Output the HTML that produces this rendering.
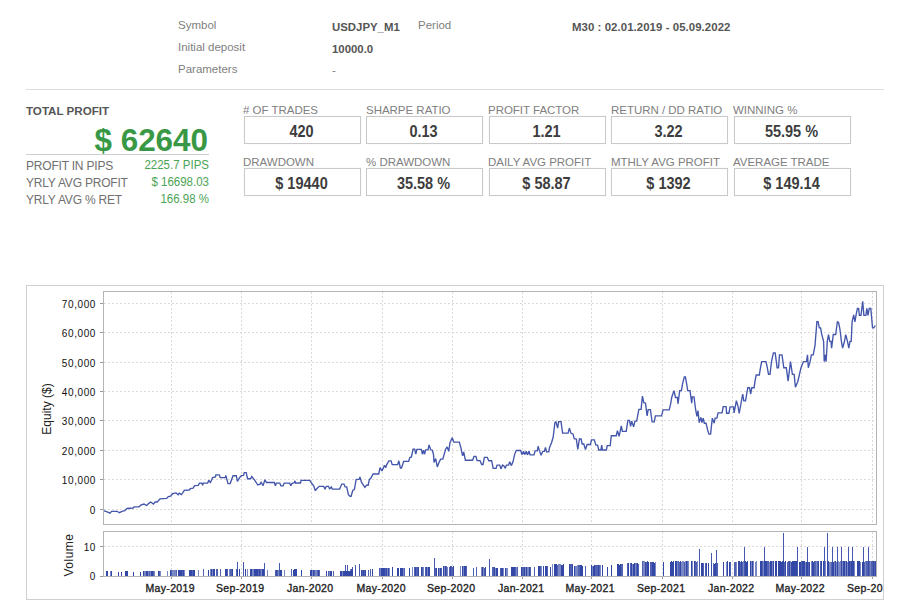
<!DOCTYPE html>
<html><head><meta charset="utf-8">
<style>
html,body{margin:0;padding:0;background:#fff;width:908px;height:612px;overflow:hidden;position:relative;font-family:"Liberation Sans",sans-serif;}
.a{position:absolute;white-space:nowrap;line-height:1;}
.hl{font-size:11.5px;color:#808080;}
.hv{font-size:11.4px;color:#555;font-weight:bold;}
.rule{position:absolute;height:1px;background:#dcdcdc;}
.lbl{font-size:11.5px;color:#808080;letter-spacing:-0.02px;}
.box{position:absolute;width:115px;height:26px;border:1px solid #c9c9c9;box-shadow:0 0 0.6px #bbb;}
.val{position:absolute;left:-1px;width:115px;text-align:center;font-size:14.5px;font-weight:bold;color:#3d3d3d;top:8px;line-height:1;transform:scaleY(1.1);transform-origin:50% 100%;}
.sl{font-size:12px;color:#707070;letter-spacing:-0.2px;}
.sv{font-size:11.5px;color:#4aa354;text-align:right;transform:scaleY(1.1);transform-origin:100% 100%;}
.yl{position:absolute;right:812px;font-size:10px;line-height:12px;color:#111;letter-spacing:0.6px;white-space:nowrap;}
.xl{position:absolute;top:583px;width:80px;text-align:center;font-size:10.5px;line-height:10px;font-weight:normal;color:#222;letter-spacing:0.35px;-webkit-text-stroke:0.35px #222;white-space:nowrap;}
.rot{position:absolute;white-space:nowrap;font-size:12px;line-height:12px;color:#222;transform:translate(-50%,-50%) rotate(-90deg);}
</style></head><body>
<!-- header -->
<div class="a hl" style="left:178px;top:20px;">Symbol</div>
<div class="a hl" style="left:178px;top:42px;">Initial deposit</div>
<div class="a hl" style="left:178px;top:64px;">Parameters</div>
<div class="a hv" style="left:332px;top:22px;">USDJPY_M1</div>
<div class="a hv" style="left:332px;top:44px;">10000.0</div>
<div class="a hl" style="left:332px;top:65px;">-</div>
<div class="a hl" style="left:418px;top:20px;">Period</div>
<div class="a hv" style="left:572px;top:22px;letter-spacing:0.07px;">M30 : 02.01.2019 - 05.09.2022</div>
<div class="rule" style="left:26px;top:89px;width:858px;"></div>

<!-- total profit -->
<div class="a" style="left:26px;top:105px;font-size:11.6px;font-weight:bold;color:#555;">TOTAL PROFIT</div>
<div class="a" style="right:700px;top:124.5px;font-size:31.4px;font-weight:bold;color:#399845;">$ 62640</div>
<div class="rule" style="left:26px;top:154px;width:183px;background:#cfcfcf;"></div>
<div class="a sl" style="left:26px;top:160px;">PROFIT IN PIPS</div>
<div class="a sl" style="left:26px;top:177px;">YRLY AVG PROFIT</div>
<div class="a sl" style="left:26px;top:194px;">YRLY AVG % RET</div>
<div class="a sv" style="right:699px;top:160px;">2225.7 PIPS</div>
<div class="a sv" style="right:699px;top:177px;">$ 16698.03</div>
<div class="a sv" style="right:699px;top:194px;">166.98 %</div>

<!-- stat boxes -->
<div class="a lbl" style="left:243px;top:105px;"># OF TRADES</div>
<div class="a lbl" style="left:366px;top:105px;">SHARPE RATIO</div>
<div class="a lbl" style="left:488px;top:105px;">PROFIT FACTOR</div>
<div class="a lbl" style="left:611px;top:105px;">RETURN / DD RATIO</div>
<div class="a lbl" style="left:733px;top:105px;">WINNING %</div>
<div class="box" style="left:244px;top:116px;"><div class="val">420</div></div>
<div class="box" style="left:366px;top:116px;"><div class="val">0.13</div></div>
<div class="box" style="left:489px;top:116px;"><div class="val">1.21</div></div>
<div class="box" style="left:611px;top:116px;"><div class="val">3.22</div></div>
<div class="box" style="left:734px;top:116px;"><div class="val">55.95 %</div></div>

<div class="a lbl" style="left:243px;top:157px;">DRAWDOWN</div>
<div class="a lbl" style="left:366px;top:157px;">% DRAWDOWN</div>
<div class="a lbl" style="left:488px;top:157px;">DAILY AVG PROFIT</div>
<div class="a lbl" style="left:611px;top:157px;">MTHLY AVG PROFIT</div>
<div class="a lbl" style="left:733px;top:157px;">AVERAGE TRADE</div>
<div class="box" style="left:244px;top:168px;"><div class="val">$ 19440</div></div>
<div class="box" style="left:366px;top:168px;"><div class="val">35.58 %</div></div>
<div class="box" style="left:489px;top:168px;"><div class="val">$ 58.87</div></div>
<div class="box" style="left:611px;top:168px;"><div class="val">$ 1392</div></div>
<div class="box" style="left:734px;top:168px;"><div class="val">$ 149.14</div></div>

<!-- chart -->
<svg style="position:absolute;left:0;top:0" width="908" height="612" viewBox="0 0 908 612" shape-rendering="crispEdges">
<rect x="26.5" y="285.5" width="857" height="314" fill="none" stroke="#d0d0d2" stroke-width="1"/>
<path d="M104 303.5H876 M104 332.5H876 M104 362.5H876 M104 391.5H876 M104 420.5H876 M104 450.5H876 M104 479.5H876 M104 509.5H876 M171.5 292V524 M171.5 532V576 M241.5 292V524 M241.5 532V576 M311.5 292V524 M311.5 532V576 M382.5 292V524 M382.5 532V576 M452.5 292V524 M452.5 532V576 M522.5 292V524 M522.5 532V576 M591.5 292V524 M591.5 532V576 M662.5 292V524 M662.5 532V576 M732.5 292V524 M732.5 532V576 M801.5 292V524 M801.5 532V576 M872.5 292V524 M872.5 532V576 M104 546.5H876" stroke="#dadada" stroke-width="1" stroke-dasharray="2,2" fill="none"/>
<path d="M100 303.5H103 M100 332.5H103 M100 362.5H103 M100 391.5H103 M100 420.5H103 M100 450.5H103 M100 479.5H103 M100 509.5H103 M100 546.5H103 M100 576.5H103 M171.5 577V579 M241.5 577V579 M311.5 577V579 M382.5 577V579 M452.5 577V579 M522.5 577V579 M591.5 577V579 M662.5 577V579 M732.5 577V579 M801.5 577V579 M872.5 577V579" stroke="#999" stroke-width="1" fill="none"/>
</svg>
<svg style="position:absolute;left:0;top:0" width="908" height="612" viewBox="0 0 908 612"><g fill="#3347a6" shape-rendering="crispEdges"><rect x="103" y="569.3" width="1" height="6.7" fill-opacity="1.00"/><rect x="106" y="571.0" width="1" height="5.0" fill-opacity="1.00"/><rect x="107" y="571.0" width="1" height="5.0" fill-opacity="1.00"/><rect x="110" y="571.4" width="1" height="4.7" fill-opacity="0.65"/><rect x="111" y="571.4" width="1" height="4.7" fill-opacity="1.00"/><rect x="118" y="572.0" width="1" height="4.0" fill-opacity="1.00"/><rect x="121" y="572.3" width="1" height="3.7" fill-opacity="1.00"/><rect x="125" y="571.0" width="1" height="5.0" fill-opacity="1.00"/><rect x="126" y="571.0" width="1" height="5.0" fill-opacity="1.00"/><rect x="127" y="571.0" width="1" height="5.0" fill-opacity="1.00"/><rect x="133" y="572.0" width="1" height="4.0" fill-opacity="1.00"/><rect x="140" y="572.0" width="1" height="4.0" fill-opacity="1.00"/><rect x="143" y="570.5" width="1" height="5.5" fill-opacity="1.00"/><rect x="144" y="570.9" width="1" height="5.1" fill-opacity="0.65"/><rect x="145" y="570.9" width="1" height="5.1" fill-opacity="0.65"/><rect x="146" y="570.5" width="1" height="5.5" fill-opacity="1.00"/><rect x="147" y="570.5" width="1" height="5.5" fill-opacity="1.00"/><rect x="148" y="570.5" width="1" height="5.5" fill-opacity="0.65"/><rect x="149" y="570.5" width="1" height="5.5" fill-opacity="0.85"/><rect x="150" y="570.5" width="1" height="5.5" fill-opacity="0.65"/><rect x="151" y="570.9" width="1" height="5.1" fill-opacity="1.00"/><rect x="152" y="570.5" width="1" height="5.5" fill-opacity="1.00"/><rect x="153" y="570.9" width="1" height="5.1" fill-opacity="0.85"/><rect x="154" y="570.5" width="1" height="5.5" fill-opacity="0.65"/><rect x="158" y="570.5" width="1" height="5.5" fill-opacity="1.00"/><rect x="159" y="570.9" width="1" height="5.1" fill-opacity="0.85"/><rect x="160" y="570.5" width="1" height="5.5" fill-opacity="0.65"/><rect x="167" y="570.5" width="1" height="5.5" fill-opacity="0.65"/><rect x="170" y="570.0" width="1" height="6.0" fill-opacity="1.00"/><rect x="171" y="569.5" width="1" height="6.5" fill-opacity="0.85"/><rect x="172" y="570.0" width="1" height="6.0" fill-opacity="0.65"/><rect x="173" y="569.5" width="1" height="6.5" fill-opacity="0.65"/><rect x="174" y="569.5" width="1" height="6.5" fill-opacity="0.65"/><rect x="175" y="569.5" width="1" height="6.5" fill-opacity="0.65"/><rect x="176" y="570.0" width="1" height="6.0" fill-opacity="0.85"/><rect x="178" y="569.5" width="1" height="6.5" fill-opacity="1.00"/><rect x="179" y="569.5" width="1" height="6.5" fill-opacity="1.00"/><rect x="180" y="569.5" width="1" height="6.5" fill-opacity="1.00"/><rect x="181" y="570.0" width="1" height="6.0" fill-opacity="1.00"/><rect x="182" y="569.5" width="1" height="6.5" fill-opacity="0.85"/><rect x="183" y="570.0" width="1" height="6.0" fill-opacity="1.00"/><rect x="184" y="570.0" width="1" height="6.0" fill-opacity="0.65"/><rect x="189" y="570.0" width="1" height="6.0" fill-opacity="1.00"/><rect x="190" y="569.5" width="1" height="6.5" fill-opacity="1.00"/><rect x="191" y="570.0" width="1" height="6.0" fill-opacity="1.00"/><rect x="192" y="569.5" width="1" height="6.5" fill-opacity="0.85"/><rect x="193" y="569.5" width="1" height="6.5" fill-opacity="1.00"/><rect x="194" y="569.5" width="1" height="6.5" fill-opacity="1.00"/><rect x="198" y="569.5" width="1" height="6.5" fill-opacity="0.65"/><rect x="203" y="569.0" width="1" height="7.0" fill-opacity="0.85"/><rect x="208" y="569.5" width="1" height="6.5" fill-opacity="1.00"/><rect x="210" y="569.0" width="1" height="7.0" fill-opacity="0.65"/><rect x="211" y="569.0" width="1" height="7.0" fill-opacity="1.00"/><rect x="212" y="569.0" width="1" height="7.0" fill-opacity="0.65"/><rect x="213" y="569.0" width="1" height="7.0" fill-opacity="1.00"/><rect x="214" y="569.0" width="1" height="7.0" fill-opacity="1.00"/><rect x="216" y="569.0" width="1" height="7.0" fill-opacity="0.85"/><rect x="217" y="569.0" width="1" height="7.0" fill-opacity="0.85"/><rect x="220" y="569.0" width="1" height="7.0" fill-opacity="0.85"/><rect x="225" y="568.8" width="1" height="7.2" fill-opacity="1.00"/><rect x="226" y="568.8" width="1" height="7.2" fill-opacity="1.00"/><rect x="227" y="568.8" width="1" height="7.2" fill-opacity="0.85"/><rect x="229" y="568.8" width="1" height="7.2" fill-opacity="0.65"/><rect x="230" y="569.3" width="1" height="6.7" fill-opacity="0.85"/><rect x="231" y="568.8" width="1" height="7.2" fill-opacity="0.85"/><rect x="232" y="568.8" width="1" height="7.2" fill-opacity="1.00"/><rect x="236" y="568.8" width="1" height="7.2" fill-opacity="0.85"/><rect x="237" y="569.3" width="1" height="6.7" fill-opacity="1.00"/><rect x="239" y="568.8" width="1" height="7.2" fill-opacity="1.00"/><rect x="245" y="569.3" width="1" height="6.7" fill-opacity="1.00"/><rect x="247" y="569.3" width="1" height="6.7" fill-opacity="0.65"/><rect x="250" y="568.8" width="1" height="7.2" fill-opacity="1.00"/><rect x="251" y="568.8" width="1" height="7.2" fill-opacity="1.00"/><rect x="252" y="568.8" width="1" height="7.2" fill-opacity="0.65"/><rect x="253" y="568.8" width="1" height="7.2" fill-opacity="0.65"/><rect x="254" y="568.8" width="1" height="7.2" fill-opacity="1.00"/><rect x="255" y="568.8" width="1" height="7.2" fill-opacity="1.00"/><rect x="256" y="568.8" width="1" height="7.2" fill-opacity="1.00"/><rect x="257" y="568.8" width="1" height="7.2" fill-opacity="1.00"/><rect x="258" y="568.8" width="1" height="7.2" fill-opacity="0.85"/><rect x="259" y="568.8" width="1" height="7.2" fill-opacity="1.00"/><rect x="260" y="569.3" width="1" height="6.7" fill-opacity="0.85"/><rect x="261" y="568.8" width="1" height="7.2" fill-opacity="0.65"/><rect x="262" y="569.3" width="1" height="6.7" fill-opacity="1.00"/><rect x="263" y="568.8" width="1" height="7.2" fill-opacity="1.00"/><rect x="267" y="570.0" width="1" height="6.0" fill-opacity="0.65"/><rect x="275" y="570.1" width="1" height="5.9" fill-opacity="0.85"/><rect x="276" y="569.7" width="1" height="6.3" fill-opacity="1.00"/><rect x="277" y="569.7" width="1" height="6.3" fill-opacity="0.85"/><rect x="278" y="569.7" width="1" height="6.3" fill-opacity="0.65"/><rect x="280" y="570.1" width="1" height="5.9" fill-opacity="1.00"/><rect x="281" y="569.7" width="1" height="6.3" fill-opacity="1.00"/><rect x="284" y="569.7" width="1" height="6.3" fill-opacity="0.65"/><rect x="291" y="569.3" width="1" height="6.7" fill-opacity="0.85"/><rect x="293" y="569.8" width="1" height="6.2" fill-opacity="1.00"/><rect x="294" y="569.3" width="1" height="6.7" fill-opacity="1.00"/><rect x="295" y="569.3" width="1" height="6.7" fill-opacity="1.00"/><rect x="296" y="569.3" width="1" height="6.7" fill-opacity="1.00"/><rect x="301" y="570.1" width="1" height="5.9" fill-opacity="1.00"/><rect x="310" y="570.1" width="1" height="5.9" fill-opacity="1.00"/><rect x="311" y="569.7" width="1" height="6.3" fill-opacity="1.00"/><rect x="312" y="570.1" width="1" height="5.9" fill-opacity="0.65"/><rect x="313" y="569.7" width="1" height="6.3" fill-opacity="1.00"/><rect x="314" y="569.7" width="1" height="6.3" fill-opacity="0.85"/><rect x="315" y="570.1" width="1" height="5.9" fill-opacity="0.65"/><rect x="316" y="569.7" width="1" height="6.3" fill-opacity="0.65"/><rect x="317" y="569.7" width="1" height="6.3" fill-opacity="0.85"/><rect x="318" y="569.7" width="1" height="6.3" fill-opacity="1.00"/><rect x="319" y="569.7" width="1" height="6.3" fill-opacity="0.85"/><rect x="326" y="571.1" width="1" height="4.9" fill-opacity="1.00"/><rect x="328" y="571.1" width="1" height="4.9" fill-opacity="0.85"/><rect x="329" y="570.7" width="1" height="5.3" fill-opacity="0.65"/><rect x="330" y="570.7" width="1" height="5.3" fill-opacity="1.00"/><rect x="331" y="570.7" width="1" height="5.3" fill-opacity="1.00"/><rect x="333" y="570.7" width="1" height="5.3" fill-opacity="0.85"/><rect x="340" y="570.7" width="1" height="5.3" fill-opacity="1.00"/><rect x="341" y="571.1" width="1" height="4.9" fill-opacity="1.00"/><rect x="342" y="570.7" width="1" height="5.3" fill-opacity="0.65"/><rect x="343" y="570.7" width="1" height="5.3" fill-opacity="1.00"/><rect x="344" y="570.7" width="1" height="5.3" fill-opacity="1.00"/><rect x="345" y="570.7" width="1" height="5.3" fill-opacity="1.00"/><rect x="346" y="570.7" width="1" height="5.3" fill-opacity="1.00"/><rect x="347" y="570.7" width="1" height="5.3" fill-opacity="1.00"/><rect x="348" y="570.7" width="1" height="5.3" fill-opacity="1.00"/><rect x="349" y="570.7" width="1" height="5.3" fill-opacity="1.00"/><rect x="350" y="571.1" width="1" height="4.9" fill-opacity="1.00"/><rect x="351" y="571.1" width="1" height="4.9" fill-opacity="0.65"/><rect x="350" y="569.0" width="1" height="7.0" fill-opacity="0.65"/><rect x="351" y="569.0" width="1" height="7.0" fill-opacity="1.00"/><rect x="352" y="569.5" width="1" height="6.5" fill-opacity="1.00"/><rect x="361" y="570.0" width="1" height="6.0" fill-opacity="1.00"/><rect x="362" y="570.4" width="1" height="5.6" fill-opacity="0.85"/><rect x="363" y="570.4" width="1" height="5.6" fill-opacity="1.00"/><rect x="364" y="570.0" width="1" height="6.0" fill-opacity="0.85"/><rect x="365" y="570.4" width="1" height="5.6" fill-opacity="1.00"/><rect x="368" y="569.8" width="1" height="6.2" fill-opacity="0.85"/><rect x="370" y="569.3" width="1" height="6.7" fill-opacity="0.85"/><rect x="372" y="569.3" width="1" height="6.7" fill-opacity="1.00"/><rect x="379" y="567.8" width="1" height="8.2" fill-opacity="0.85"/><rect x="380" y="567.8" width="1" height="8.2" fill-opacity="0.65"/><rect x="381" y="567.8" width="1" height="8.2" fill-opacity="1.00"/><rect x="382" y="567.8" width="1" height="8.2" fill-opacity="1.00"/><rect x="383" y="567.8" width="1" height="8.2" fill-opacity="1.00"/><rect x="384" y="568.4" width="1" height="7.6" fill-opacity="1.00"/><rect x="385" y="567.8" width="1" height="8.2" fill-opacity="0.85"/><rect x="386" y="568.4" width="1" height="7.6" fill-opacity="1.00"/><rect x="387" y="567.8" width="1" height="8.2" fill-opacity="0.65"/><rect x="388" y="567.8" width="1" height="8.2" fill-opacity="1.00"/><rect x="389" y="567.8" width="1" height="8.2" fill-opacity="0.65"/><rect x="392" y="567.2" width="1" height="8.8" fill-opacity="1.00"/><rect x="397" y="567.5" width="1" height="8.5" fill-opacity="1.00"/><rect x="398" y="568.1" width="1" height="7.9" fill-opacity="1.00"/><rect x="400" y="567.5" width="1" height="8.5" fill-opacity="1.00"/><rect x="401" y="568.1" width="1" height="7.9" fill-opacity="1.00"/><rect x="402" y="567.5" width="1" height="8.5" fill-opacity="1.00"/><rect x="403" y="567.5" width="1" height="8.5" fill-opacity="0.65"/><rect x="404" y="567.5" width="1" height="8.5" fill-opacity="0.85"/><rect x="409" y="567.5" width="1" height="8.5" fill-opacity="1.00"/><rect x="412" y="567.2" width="1" height="8.8" fill-opacity="0.65"/><rect x="414" y="566.5" width="1" height="9.5" fill-opacity="0.85"/><rect x="415" y="566.5" width="1" height="9.5" fill-opacity="1.00"/><rect x="416" y="566.5" width="1" height="9.5" fill-opacity="0.85"/><rect x="417" y="566.5" width="1" height="9.5" fill-opacity="0.85"/><rect x="418" y="567.2" width="1" height="8.8" fill-opacity="1.00"/><rect x="421" y="566.5" width="1" height="9.5" fill-opacity="1.00"/><rect x="422" y="566.5" width="1" height="9.5" fill-opacity="0.85"/><rect x="423" y="566.5" width="1" height="9.5" fill-opacity="0.65"/><rect x="425" y="566.5" width="1" height="9.5" fill-opacity="0.85"/><rect x="426" y="566.5" width="1" height="9.5" fill-opacity="1.00"/><rect x="427" y="566.5" width="1" height="9.5" fill-opacity="0.65"/><rect x="428" y="566.5" width="1" height="9.5" fill-opacity="1.00"/><rect x="429" y="566.5" width="1" height="9.5" fill-opacity="1.00"/><rect x="435" y="567.5" width="1" height="8.5" fill-opacity="0.85"/><rect x="436" y="568.1" width="1" height="7.9" fill-opacity="1.00"/><rect x="438" y="567.5" width="1" height="8.5" fill-opacity="1.00"/><rect x="439" y="568.1" width="1" height="7.9" fill-opacity="0.65"/><rect x="440" y="568.1" width="1" height="7.9" fill-opacity="1.00"/><rect x="441" y="567.5" width="1" height="8.5" fill-opacity="0.85"/><rect x="443" y="566.0" width="1" height="10.0" fill-opacity="1.00"/><rect x="444" y="566.0" width="1" height="10.0" fill-opacity="0.65"/><rect x="445" y="566.0" width="1" height="10.0" fill-opacity="1.00"/><rect x="446" y="566.0" width="1" height="10.0" fill-opacity="0.85"/><rect x="447" y="566.7" width="1" height="9.3" fill-opacity="0.65"/><rect x="449" y="566.7" width="1" height="9.3" fill-opacity="0.85"/><rect x="450" y="566.0" width="1" height="10.0" fill-opacity="1.00"/><rect x="451" y="566.0" width="1" height="10.0" fill-opacity="0.85"/><rect x="452" y="566.7" width="1" height="9.3" fill-opacity="0.85"/><rect x="453" y="566.0" width="1" height="10.0" fill-opacity="1.00"/><rect x="460" y="565.5" width="1" height="10.5" fill-opacity="0.65"/><rect x="462" y="565.5" width="1" height="10.5" fill-opacity="1.00"/><rect x="463" y="566.2" width="1" height="9.8" fill-opacity="0.65"/><rect x="464" y="565.5" width="1" height="10.5" fill-opacity="1.00"/><rect x="465" y="565.5" width="1" height="10.5" fill-opacity="1.00"/><rect x="466" y="565.5" width="1" height="10.5" fill-opacity="0.85"/><rect x="473" y="568.1" width="1" height="7.9" fill-opacity="0.85"/><rect x="476" y="567.2" width="1" height="8.8" fill-opacity="0.85"/><rect x="481" y="567.0" width="1" height="9.0" fill-opacity="0.65"/><rect x="482" y="567.0" width="1" height="9.0" fill-opacity="1.00"/><rect x="483" y="567.0" width="1" height="9.0" fill-opacity="0.65"/><rect x="484" y="567.6" width="1" height="8.4" fill-opacity="0.85"/><rect x="485" y="567.0" width="1" height="9.0" fill-opacity="1.00"/><rect x="492" y="567.3" width="1" height="8.7" fill-opacity="0.85"/><rect x="493" y="567.3" width="1" height="8.7" fill-opacity="0.85"/><rect x="494" y="567.3" width="1" height="8.7" fill-opacity="1.00"/><rect x="495" y="567.9" width="1" height="8.1" fill-opacity="0.65"/><rect x="496" y="567.9" width="1" height="8.1" fill-opacity="1.00"/><rect x="497" y="567.9" width="1" height="8.1" fill-opacity="1.00"/><rect x="500" y="567.8" width="1" height="8.2" fill-opacity="0.85"/><rect x="501" y="567.8" width="1" height="8.2" fill-opacity="1.00"/><rect x="502" y="568.4" width="1" height="7.6" fill-opacity="1.00"/><rect x="503" y="568.4" width="1" height="7.6" fill-opacity="0.65"/><rect x="505" y="567.8" width="1" height="8.2" fill-opacity="1.00"/><rect x="506" y="568.4" width="1" height="7.6" fill-opacity="0.65"/><rect x="507" y="568.4" width="1" height="7.6" fill-opacity="0.65"/><rect x="511" y="566.8" width="1" height="9.2" fill-opacity="1.00"/><rect x="512" y="567.4" width="1" height="8.6" fill-opacity="1.00"/><rect x="513" y="566.8" width="1" height="9.2" fill-opacity="1.00"/><rect x="514" y="566.8" width="1" height="9.2" fill-opacity="1.00"/><rect x="515" y="566.8" width="1" height="9.2" fill-opacity="0.85"/><rect x="516" y="566.8" width="1" height="9.2" fill-opacity="0.65"/><rect x="517" y="566.8" width="1" height="9.2" fill-opacity="0.85"/><rect x="521" y="566.5" width="1" height="9.5" fill-opacity="1.00"/><rect x="522" y="567.2" width="1" height="8.8" fill-opacity="0.85"/><rect x="523" y="566.5" width="1" height="9.5" fill-opacity="0.85"/><rect x="524" y="566.5" width="1" height="9.5" fill-opacity="1.00"/><rect x="525" y="566.5" width="1" height="9.5" fill-opacity="0.65"/><rect x="526" y="567.2" width="1" height="8.8" fill-opacity="1.00"/><rect x="527" y="566.5" width="1" height="9.5" fill-opacity="0.65"/><rect x="528" y="566.5" width="1" height="9.5" fill-opacity="0.65"/><rect x="529" y="566.5" width="1" height="9.5" fill-opacity="1.00"/><rect x="530" y="567.2" width="1" height="8.8" fill-opacity="0.85"/><rect x="534" y="566.5" width="1" height="9.5" fill-opacity="0.85"/><rect x="538" y="565.8" width="1" height="10.2" fill-opacity="1.00"/><rect x="539" y="565.8" width="1" height="10.2" fill-opacity="1.00"/><rect x="540" y="565.8" width="1" height="10.2" fill-opacity="0.85"/><rect x="541" y="565.8" width="1" height="10.2" fill-opacity="0.65"/><rect x="543" y="565.8" width="1" height="10.2" fill-opacity="1.00"/><rect x="545" y="565.8" width="1" height="10.2" fill-opacity="1.00"/><rect x="546" y="565.8" width="1" height="10.2" fill-opacity="1.00"/><rect x="547" y="565.8" width="1" height="10.2" fill-opacity="0.85"/><rect x="550" y="566.5" width="1" height="9.5" fill-opacity="1.00"/><rect x="552" y="563.7" width="1" height="12.3" fill-opacity="0.65"/><rect x="554" y="563.7" width="1" height="12.3" fill-opacity="1.00"/><rect x="555" y="563.7" width="1" height="12.3" fill-opacity="1.00"/><rect x="556" y="563.7" width="1" height="12.3" fill-opacity="1.00"/><rect x="557" y="564.6" width="1" height="11.4" fill-opacity="0.85"/><rect x="558" y="563.7" width="1" height="12.3" fill-opacity="0.65"/><rect x="559" y="563.7" width="1" height="12.3" fill-opacity="0.65"/><rect x="560" y="563.7" width="1" height="12.3" fill-opacity="0.65"/><rect x="561" y="564.6" width="1" height="11.4" fill-opacity="1.00"/><rect x="562" y="564.6" width="1" height="11.4" fill-opacity="1.00"/><rect x="563" y="563.7" width="1" height="12.3" fill-opacity="1.00"/><rect x="569" y="564.0" width="1" height="12.0" fill-opacity="1.00"/><rect x="570" y="564.0" width="1" height="12.0" fill-opacity="0.85"/><rect x="571" y="564.0" width="1" height="12.0" fill-opacity="0.85"/><rect x="572" y="564.0" width="1" height="12.0" fill-opacity="1.00"/><rect x="574" y="565.8" width="1" height="10.2" fill-opacity="1.00"/><rect x="575" y="565.8" width="1" height="10.2" fill-opacity="0.65"/><rect x="576" y="565.8" width="1" height="10.2" fill-opacity="0.65"/><rect x="577" y="565.0" width="1" height="11.0" fill-opacity="0.65"/><rect x="578" y="565.0" width="1" height="11.0" fill-opacity="0.85"/><rect x="579" y="565.0" width="1" height="11.0" fill-opacity="0.85"/><rect x="580" y="565.0" width="1" height="11.0" fill-opacity="1.00"/><rect x="581" y="565.0" width="1" height="11.0" fill-opacity="1.00"/><rect x="582" y="565.8" width="1" height="10.2" fill-opacity="1.00"/><rect x="585" y="565.8" width="1" height="10.2" fill-opacity="0.85"/><rect x="591" y="565.0" width="1" height="11.0" fill-opacity="1.00"/><rect x="592" y="565.8" width="1" height="10.2" fill-opacity="0.65"/><rect x="593" y="565.8" width="1" height="10.2" fill-opacity="1.00"/><rect x="594" y="565.0" width="1" height="11.0" fill-opacity="1.00"/><rect x="595" y="565.0" width="1" height="11.0" fill-opacity="0.85"/><rect x="596" y="565.0" width="1" height="11.0" fill-opacity="0.85"/><rect x="597" y="565.0" width="1" height="11.0" fill-opacity="0.85"/><rect x="598" y="565.0" width="1" height="11.0" fill-opacity="1.00"/><rect x="599" y="565.0" width="1" height="11.0" fill-opacity="0.85"/><rect x="600" y="565.0" width="1" height="11.0" fill-opacity="0.65"/><rect x="602" y="565.0" width="1" height="11.0" fill-opacity="1.00"/><rect x="602" y="565.8" width="1" height="10.2" fill-opacity="1.00"/><rect x="607" y="566.7" width="1" height="9.3" fill-opacity="1.00"/><rect x="611" y="565.0" width="1" height="11.0" fill-opacity="1.00"/><rect x="617" y="564.0" width="1" height="12.0" fill-opacity="1.00"/><rect x="618" y="564.0" width="1" height="12.0" fill-opacity="1.00"/><rect x="619" y="564.8" width="1" height="11.2" fill-opacity="1.00"/><rect x="620" y="564.0" width="1" height="12.0" fill-opacity="1.00"/><rect x="621" y="564.0" width="1" height="12.0" fill-opacity="0.85"/><rect x="622" y="564.0" width="1" height="12.0" fill-opacity="0.85"/><rect x="627" y="563.0" width="1" height="13.0" fill-opacity="0.85"/><rect x="628" y="563.0" width="1" height="13.0" fill-opacity="1.00"/><rect x="630" y="563.0" width="1" height="13.0" fill-opacity="0.85"/><rect x="631" y="563.0" width="1" height="13.0" fill-opacity="1.00"/><rect x="632" y="563.9" width="1" height="12.1" fill-opacity="0.65"/><rect x="633" y="563.9" width="1" height="12.1" fill-opacity="1.00"/><rect x="634" y="563.0" width="1" height="13.0" fill-opacity="1.00"/><rect x="635" y="563.0" width="1" height="13.0" fill-opacity="0.65"/><rect x="636" y="563.0" width="1" height="13.0" fill-opacity="0.85"/><rect x="637" y="563.0" width="1" height="13.0" fill-opacity="1.00"/><rect x="638" y="563.9" width="1" height="12.1" fill-opacity="0.85"/><rect x="642" y="561.2" width="1" height="14.8" fill-opacity="0.85"/><rect x="643" y="561.2" width="1" height="14.8" fill-opacity="0.65"/><rect x="644" y="561.2" width="1" height="14.8" fill-opacity="0.65"/><rect x="645" y="562.2" width="1" height="13.8" fill-opacity="1.00"/><rect x="646" y="562.2" width="1" height="13.8" fill-opacity="0.85"/><rect x="647" y="561.2" width="1" height="14.8" fill-opacity="1.00"/><rect x="648" y="562.2" width="1" height="13.8" fill-opacity="1.00"/><rect x="650" y="562.2" width="1" height="13.8" fill-opacity="0.85"/><rect x="651" y="562.2" width="1" height="13.8" fill-opacity="0.85"/><rect x="652" y="562.2" width="1" height="13.8" fill-opacity="1.00"/><rect x="653" y="562.2" width="1" height="13.8" fill-opacity="1.00"/><rect x="654" y="563.2" width="1" height="12.8" fill-opacity="1.00"/><rect x="655" y="562.2" width="1" height="13.8" fill-opacity="0.65"/><rect x="663" y="562.2" width="1" height="13.8" fill-opacity="1.00"/><rect x="670" y="562.2" width="1" height="13.8" fill-opacity="1.00"/><rect x="671" y="561.2" width="1" height="14.8" fill-opacity="1.00"/><rect x="672" y="562.2" width="1" height="13.8" fill-opacity="1.00"/><rect x="673" y="561.2" width="1" height="14.8" fill-opacity="1.00"/><rect x="675" y="561.2" width="1" height="14.8" fill-opacity="1.00"/><rect x="676" y="561.2" width="1" height="14.8" fill-opacity="1.00"/><rect x="677" y="561.2" width="1" height="14.8" fill-opacity="0.65"/><rect x="678" y="561.2" width="1" height="14.8" fill-opacity="0.85"/><rect x="679" y="562.2" width="1" height="13.8" fill-opacity="0.85"/><rect x="680" y="561.2" width="1" height="14.8" fill-opacity="1.00"/><rect x="681" y="562.2" width="1" height="13.8" fill-opacity="0.65"/><rect x="682" y="561.2" width="1" height="14.8" fill-opacity="0.65"/><rect x="683" y="561.2" width="1" height="14.8" fill-opacity="0.65"/><rect x="684" y="562.2" width="1" height="13.8" fill-opacity="0.85"/><rect x="685" y="561.2" width="1" height="14.8" fill-opacity="0.65"/><rect x="686" y="561.2" width="1" height="14.8" fill-opacity="1.00"/><rect x="687" y="561.2" width="1" height="14.8" fill-opacity="0.85"/><rect x="688" y="561.2" width="1" height="14.8" fill-opacity="0.65"/><rect x="691" y="561.2" width="1" height="14.8" fill-opacity="1.00"/><rect x="692" y="561.2" width="1" height="14.8" fill-opacity="0.65"/><rect x="694" y="561.2" width="1" height="14.8" fill-opacity="1.00"/><rect x="695" y="561.2" width="1" height="14.8" fill-opacity="0.85"/><rect x="696" y="562.2" width="1" height="13.8" fill-opacity="0.85"/><rect x="697" y="561.2" width="1" height="14.8" fill-opacity="0.65"/><rect x="701" y="563.0" width="1" height="13.0" fill-opacity="1.00"/><rect x="702" y="563.0" width="1" height="13.0" fill-opacity="1.00"/><rect x="703" y="563.0" width="1" height="13.0" fill-opacity="0.85"/><rect x="705" y="563.0" width="1" height="13.0" fill-opacity="0.85"/><rect x="706" y="563.0" width="1" height="13.0" fill-opacity="1.00"/><rect x="708" y="563.0" width="1" height="13.0" fill-opacity="1.00"/><rect x="711" y="563.0" width="1" height="13.0" fill-opacity="0.65"/><rect x="713" y="563.0" width="1" height="13.0" fill-opacity="0.85"/><rect x="714" y="563.9" width="1" height="12.1" fill-opacity="1.00"/><rect x="715" y="563.0" width="1" height="13.0" fill-opacity="1.00"/><rect x="717" y="563.0" width="1" height="13.0" fill-opacity="0.85"/><rect x="723" y="562.2" width="1" height="13.8" fill-opacity="1.00"/><rect x="726" y="562.2" width="1" height="13.8" fill-opacity="0.65"/><rect x="727" y="561.2" width="1" height="14.8" fill-opacity="1.00"/><rect x="729" y="561.8" width="1" height="14.2" fill-opacity="1.00"/><rect x="730" y="561.8" width="1" height="14.2" fill-opacity="0.85"/><rect x="734" y="561.5" width="1" height="14.5" fill-opacity="0.85"/><rect x="735" y="561.5" width="1" height="14.5" fill-opacity="0.85"/><rect x="736" y="561.5" width="1" height="14.5" fill-opacity="0.65"/><rect x="738" y="561.2" width="1" height="14.8" fill-opacity="1.00"/><rect x="739" y="561.2" width="1" height="14.8" fill-opacity="1.00"/><rect x="740" y="562.2" width="1" height="13.8" fill-opacity="0.85"/><rect x="741" y="561.2" width="1" height="14.8" fill-opacity="1.00"/><rect x="742" y="562.2" width="1" height="13.8" fill-opacity="0.85"/><rect x="743" y="561.2" width="1" height="14.8" fill-opacity="0.65"/><rect x="745" y="561.2" width="1" height="14.8" fill-opacity="1.00"/><rect x="746" y="562.2" width="1" height="13.8" fill-opacity="1.00"/><rect x="747" y="561.2" width="1" height="14.8" fill-opacity="1.00"/><rect x="750" y="561.2" width="1" height="14.8" fill-opacity="1.00"/><rect x="751" y="561.2" width="1" height="14.8" fill-opacity="0.65"/><rect x="752" y="561.2" width="1" height="14.8" fill-opacity="1.00"/><rect x="753" y="561.2" width="1" height="14.8" fill-opacity="0.65"/><rect x="755" y="562.2" width="1" height="13.8" fill-opacity="0.65"/><rect x="756" y="561.2" width="1" height="14.8" fill-opacity="0.65"/><rect x="760" y="561.2" width="1" height="14.8" fill-opacity="1.00"/><rect x="761" y="561.2" width="1" height="14.8" fill-opacity="1.00"/><rect x="762" y="561.2" width="1" height="14.8" fill-opacity="0.85"/><rect x="763" y="561.2" width="1" height="14.8" fill-opacity="0.65"/><rect x="764" y="561.2" width="1" height="14.8" fill-opacity="1.00"/><rect x="765" y="561.2" width="1" height="14.8" fill-opacity="1.00"/><rect x="766" y="561.2" width="1" height="14.8" fill-opacity="1.00"/><rect x="767" y="561.2" width="1" height="14.8" fill-opacity="0.85"/><rect x="768" y="561.2" width="1" height="14.8" fill-opacity="0.85"/><rect x="769" y="562.2" width="1" height="13.8" fill-opacity="0.65"/><rect x="770" y="561.2" width="1" height="14.8" fill-opacity="1.00"/><rect x="771" y="561.2" width="1" height="14.8" fill-opacity="1.00"/><rect x="772" y="561.2" width="1" height="14.8" fill-opacity="0.65"/><rect x="773" y="561.2" width="1" height="14.8" fill-opacity="1.00"/><rect x="775" y="561.2" width="1" height="14.8" fill-opacity="1.00"/><rect x="776" y="561.2" width="1" height="14.8" fill-opacity="1.00"/><rect x="778" y="561.2" width="1" height="14.8" fill-opacity="1.00"/><rect x="779" y="561.2" width="1" height="14.8" fill-opacity="1.00"/><rect x="780" y="561.2" width="1" height="14.8" fill-opacity="1.00"/><rect x="781" y="562.2" width="1" height="13.8" fill-opacity="1.00"/><rect x="782" y="561.2" width="1" height="14.8" fill-opacity="1.00"/><rect x="783" y="561.2" width="1" height="14.8" fill-opacity="1.00"/><rect x="784" y="562.2" width="1" height="13.8" fill-opacity="0.85"/><rect x="785" y="561.2" width="1" height="14.8" fill-opacity="1.00"/><rect x="787" y="562.2" width="1" height="13.8" fill-opacity="0.85"/><rect x="788" y="561.2" width="1" height="14.8" fill-opacity="0.85"/><rect x="789" y="561.2" width="1" height="14.8" fill-opacity="1.00"/><rect x="790" y="561.2" width="1" height="14.8" fill-opacity="0.65"/><rect x="791" y="562.2" width="1" height="13.8" fill-opacity="1.00"/><rect x="792" y="561.2" width="1" height="14.8" fill-opacity="1.00"/><rect x="793" y="561.2" width="1" height="14.8" fill-opacity="1.00"/><rect x="794" y="561.2" width="1" height="14.8" fill-opacity="1.00"/><rect x="795" y="561.2" width="1" height="14.8" fill-opacity="1.00"/><rect x="796" y="561.2" width="1" height="14.8" fill-opacity="1.00"/><rect x="799" y="562.2" width="1" height="13.8" fill-opacity="1.00"/><rect x="800" y="562.2" width="1" height="13.8" fill-opacity="1.00"/><rect x="801" y="561.2" width="1" height="14.8" fill-opacity="0.85"/><rect x="802" y="561.2" width="1" height="14.8" fill-opacity="1.00"/><rect x="803" y="561.2" width="1" height="14.8" fill-opacity="1.00"/><rect x="804" y="561.2" width="1" height="14.8" fill-opacity="1.00"/><rect x="805" y="562.2" width="1" height="13.8" fill-opacity="0.65"/><rect x="806" y="562.2" width="1" height="13.8" fill-opacity="1.00"/><rect x="807" y="561.2" width="1" height="14.8" fill-opacity="1.00"/><rect x="808" y="562.2" width="1" height="13.8" fill-opacity="0.85"/><rect x="809" y="562.2" width="1" height="13.8" fill-opacity="1.00"/><rect x="811" y="561.2" width="1" height="14.8" fill-opacity="0.65"/><rect x="812" y="561.2" width="1" height="14.8" fill-opacity="1.00"/><rect x="813" y="562.2" width="1" height="13.8" fill-opacity="1.00"/><rect x="814" y="561.2" width="1" height="14.8" fill-opacity="0.85"/><rect x="815" y="561.2" width="1" height="14.8" fill-opacity="0.85"/><rect x="816" y="561.2" width="1" height="14.8" fill-opacity="0.65"/><rect x="817" y="561.2" width="1" height="14.8" fill-opacity="0.85"/><rect x="818" y="561.2" width="1" height="14.8" fill-opacity="1.00"/><rect x="820" y="561.2" width="1" height="14.8" fill-opacity="0.85"/><rect x="821" y="561.2" width="1" height="14.8" fill-opacity="1.00"/><rect x="823" y="561.2" width="1" height="14.8" fill-opacity="1.00"/><rect x="825" y="561.2" width="1" height="14.8" fill-opacity="0.65"/><rect x="827" y="562.2" width="1" height="13.8" fill-opacity="0.85"/><rect x="828" y="561.2" width="1" height="14.8" fill-opacity="1.00"/><rect x="829" y="562.2" width="1" height="13.8" fill-opacity="0.65"/><rect x="830" y="562.2" width="1" height="13.8" fill-opacity="0.65"/><rect x="831" y="562.2" width="1" height="13.8" fill-opacity="0.85"/><rect x="832" y="562.2" width="1" height="13.8" fill-opacity="0.85"/><rect x="833" y="562.2" width="1" height="13.8" fill-opacity="1.00"/><rect x="834" y="561.2" width="1" height="14.8" fill-opacity="0.65"/><rect x="835" y="561.2" width="1" height="14.8" fill-opacity="1.00"/><rect x="836" y="562.2" width="1" height="13.8" fill-opacity="0.65"/><rect x="837" y="562.2" width="1" height="13.8" fill-opacity="1.00"/><rect x="838" y="561.2" width="1" height="14.8" fill-opacity="0.65"/><rect x="839" y="562.2" width="1" height="13.8" fill-opacity="0.65"/><rect x="840" y="561.2" width="1" height="14.8" fill-opacity="0.65"/><rect x="841" y="561.2" width="1" height="14.8" fill-opacity="0.85"/><rect x="842" y="561.2" width="1" height="14.8" fill-opacity="0.65"/><rect x="843" y="561.2" width="1" height="14.8" fill-opacity="1.00"/><rect x="844" y="561.2" width="1" height="14.8" fill-opacity="1.00"/><rect x="845" y="561.2" width="1" height="14.8" fill-opacity="0.65"/><rect x="846" y="561.2" width="1" height="14.8" fill-opacity="1.00"/><rect x="847" y="562.2" width="1" height="13.8" fill-opacity="0.65"/><rect x="848" y="562.2" width="1" height="13.8" fill-opacity="1.00"/><rect x="849" y="561.2" width="1" height="14.8" fill-opacity="1.00"/><rect x="850" y="561.2" width="1" height="14.8" fill-opacity="0.85"/><rect x="851" y="561.2" width="1" height="14.8" fill-opacity="1.00"/><rect x="852" y="561.2" width="1" height="14.8" fill-opacity="0.65"/><rect x="853" y="561.2" width="1" height="14.8" fill-opacity="1.00"/><rect x="854" y="561.2" width="1" height="14.8" fill-opacity="0.65"/><rect x="857" y="561.2" width="1" height="14.8" fill-opacity="1.00"/><rect x="858" y="561.2" width="1" height="14.8" fill-opacity="1.00"/><rect x="859" y="561.2" width="1" height="14.8" fill-opacity="1.00"/><rect x="860" y="562.2" width="1" height="13.8" fill-opacity="0.65"/><rect x="862" y="562.2" width="1" height="13.8" fill-opacity="1.00"/><rect x="863" y="561.2" width="1" height="14.8" fill-opacity="1.00"/><rect x="864" y="562.2" width="1" height="13.8" fill-opacity="0.85"/><rect x="865" y="561.2" width="1" height="14.8" fill-opacity="0.65"/><rect x="866" y="561.2" width="1" height="14.8" fill-opacity="0.85"/><rect x="867" y="561.2" width="1" height="14.8" fill-opacity="0.85"/><rect x="868" y="561.2" width="1" height="14.8" fill-opacity="0.65"/><rect x="869" y="561.2" width="1" height="14.8" fill-opacity="0.85"/><rect x="870" y="561.2" width="1" height="14.8" fill-opacity="0.65"/><rect x="871" y="561.2" width="1" height="14.8" fill-opacity="0.85"/><rect x="872" y="561.2" width="1" height="14.8" fill-opacity="0.85"/><rect x="873" y="561.2" width="1" height="14.8" fill-opacity="1.00"/><rect x="874" y="561.2" width="1" height="14.8" fill-opacity="0.85"/><rect x="875" y="561.2" width="1" height="14.8" fill-opacity="1.00"/><rect x="237.0" y="561.9" width="1" height="14.1" fill-opacity="0.90"/><rect x="243.0" y="561.5" width="1" height="14.5" fill-opacity="0.90"/><rect x="264.0" y="563.0" width="1" height="13.0" fill-opacity="0.90"/><rect x="279.0" y="562.8" width="1" height="13.2" fill-opacity="0.90"/><rect x="345.0" y="565.0" width="1" height="11.0" fill-opacity="0.90"/><rect x="347.0" y="565.0" width="1" height="11.0" fill-opacity="0.90"/><rect x="352.0" y="566.5" width="1" height="9.5" fill-opacity="0.90"/><rect x="355.0" y="565.0" width="1" height="11.0" fill-opacity="0.90"/><rect x="359.0" y="563.5" width="1" height="12.5" fill-opacity="0.90"/><rect x="434.0" y="558.0" width="1" height="18.0" fill-opacity="0.90"/><rect x="489.0" y="559.0" width="1" height="17.0" fill-opacity="0.90"/><rect x="699.0" y="549.0" width="1" height="27.0" fill-opacity="0.90"/><rect x="711.0" y="552.5" width="1" height="23.5" fill-opacity="0.90"/><rect x="716.0" y="549.5" width="1" height="26.5" fill-opacity="0.90"/><rect x="744.0" y="546.8" width="1" height="29.2" fill-opacity="0.90"/><rect x="764.0" y="546.8" width="1" height="29.2" fill-opacity="0.90"/><rect x="783.0" y="533.0" width="1" height="43.0" fill-opacity="0.90"/><rect x="797.0" y="546.8" width="1" height="29.2" fill-opacity="0.90"/><rect x="807.0" y="546.8" width="1" height="29.2" fill-opacity="0.90"/><rect x="824.0" y="546.8" width="1" height="29.2" fill-opacity="0.90"/><rect x="827.0" y="533.0" width="1" height="43.0" fill-opacity="0.90"/><rect x="832.0" y="546.8" width="1" height="29.2" fill-opacity="0.90"/><rect x="837.0" y="546.8" width="1" height="29.2" fill-opacity="0.90"/><rect x="841.0" y="546.8" width="1" height="29.2" fill-opacity="0.90"/><rect x="848.0" y="546.8" width="1" height="29.2" fill-opacity="0.90"/><rect x="852.0" y="546.8" width="1" height="29.2" fill-opacity="0.90"/><rect x="863.0" y="546.8" width="1" height="29.2" fill-opacity="0.90"/><rect x="868.0" y="546.8" width="1" height="29.2" fill-opacity="0.90"/></g><polyline points="103.3,510.7 106.6,511.6 109.9,513.2 111.6,511.3 117.1,511.3 119.3,512.7 122.0,511.3 124.8,510.7 127.0,508.5 133.0,508.0 134.1,506.9 139.1,506.9 140.7,505.2 144.0,504.1 146.8,505.5 148.5,503.6 150.7,502.0 153.4,504.1 155.1,502.0 157.3,502.0 160.0,498.9 166.6,498.4 168.3,496.7 170.5,496.2 172.7,493.7 176.0,492.9 178.2,494.8 179.3,493.1 181.5,494.6 184.3,490.4 189.2,490.0 190.3,488.7 193.1,488.2 194.7,485.6 198.3,485.3 199.4,483.1 201.6,483.1 202.7,485.3 203.3,483.1 207.7,483.1 208.8,480.3 210.4,482.5 211.5,480.3 212.6,477.6 215.4,477.0 215.9,474.8 219.2,474.8 220.3,477.6 225.3,477.6 225.8,475.4 228.0,483.6 230.2,483.6 233.0,475.7 236.3,475.7 237.4,481.4 239.6,477.6 241.3,475.7 243.5,475.4 244.3,472.6 246.2,472.6 247.6,478.7 250.6,478.7 251.7,476.5 254.5,479.8 257.8,485.0 260.0,484.2 261.1,482.3 263.1,485.6 264.9,479.8 266.6,482.5 274.3,482.5 275.4,485.8 276.5,483.1 279.8,483.1 280.9,485.8 283.1,485.8 284.2,483.1 289.7,483.1 290.8,485.8 291.9,483.6 294.4,482.5 295.0,480.8 295.5,483.0 300.5,483.0 301.0,480.3 309.8,480.3 311.5,483.0 313.7,485.8 315.3,490.7 317.0,488.5 319.2,486.3 323.6,486.3 325.0,489.1 326.3,486.3 328.5,486.3 329.6,489.1 331.3,486.9 332.4,489.1 339.6,489.1 341.8,484.1 344.0,484.1 345.1,486.9 346.7,486.9 348.4,494.6 350.0,496.3 351.1,496.3 352.8,490.2 354.4,489.6 356.1,479.7 359.4,479.2 359.9,477.0 361.6,482.5 364.9,487.4 366.5,485.2 368.2,485.2 369.3,479.7 370.9,478.1 373.1,474.0 378.7,474.0 380.1,467.6 382.0,470.9 384.5,465.4 385.8,467.6 386.7,464.6 388.9,460.8 391.1,460.8 392.2,464.6 397.7,464.6 398.8,460.8 400.4,468.0 401.5,468.0 403.7,461.3 408.7,461.3 409.8,457.5 411.4,456.9 413.1,449.2 414.7,449.2 415.8,454.2 416.9,449.4 421.3,449.4 422.4,454.2 423.5,450.3 424.6,454.2 425.7,449.8 428.0,449.8 429.1,445.0 430.7,449.8 432.4,450.3 433.5,454.7 434.0,462.4 435.7,458.6 437.3,466.9 439.0,462.4 440.6,459.1 442.8,459.1 445.6,449.2 447.2,447.0 448.7,451.4 450.0,442.6 452.2,437.7 453.8,442.1 459.3,442.1 461.0,448.1 462.6,455.8 463.7,452.0 465.4,460.2 472.6,460.2 474.0,456.4 475.9,456.4 477.0,460.5 480.0,460.7 481.7,464.5 483.0,464.5 484.4,457.4 487.2,457.4 488.8,460.7 491.6,460.7 493.2,468.4 496.0,468.4 497.1,465.1 499.8,465.1 500.9,468.9 502.6,465.1 504.2,466.2 505.3,468.4 506.4,465.1 508.6,465.1 509.7,461.8 511.4,465.6 513.0,461.8 514.7,454.1 516.3,450.5 520.7,450.5 521.9,454.6 523.5,451.3 524.6,454.6 526.3,451.3 527.4,454.9 529.0,451.3 530.1,454.9 534.0,454.9 535.1,450.9 537.3,450.9 538.1,446.3 539.5,450.9 541.1,455.2 542.8,451.3 544.4,451.3 545.5,447.4 546.6,451.9 548.8,451.9 549.4,448.0 551.6,442.5 553.2,437.0 554.9,422.7 556.0,421.6 557.6,428.2 558.7,421.6 561.0,421.6 562.6,433.1 568.1,433.1 569.4,428.2 570.9,433.1 573.1,434.2 574.2,438.6 576.3,439.0 577.8,449.5 579.4,439.0 581.1,439.0 582.2,444.0 583.8,444.0 585.5,449.5 587.1,444.5 590.4,444.5 591.5,439.8 594.3,439.8 595.9,445.1 597.6,445.1 598.7,450.0 600.9,450.0 601.7,445.1 602.5,450.0 606.4,450.0 607.2,445.6 610.2,445.6 611.3,435.7 616.3,435.7 617.4,430.7 619.1,436.3 620.2,431.3 621.3,425.8 622.4,431.3 626.2,431.3 627.9,420.3 629.5,420.3 630.6,426.3 631.7,421.1 633.6,426.9 635.0,421.1 636.7,421.1 637.8,414.8 638.9,409.3 641.1,409.3 642.4,396.1 643.8,402.7 645.5,403.2 647.1,415.9 648.2,409.6 650.4,409.6 652.1,421.9 654.3,421.9 655.4,415.9 661.5,415.9 663.1,409.8 669.2,409.8 670.8,403.2 671.7,397.5 674.0,390.6 675.5,397.5 677.4,397.5 678.0,403.8 679.7,390.6 681.4,390.6 682.6,383.7 684.3,376.9 685.4,376.9 686.6,383.7 687.7,390.6 690.0,390.6 691.7,403.2 692.3,396.9 694.0,396.9 695.7,410.0 696.9,416.3 698.0,410.6 699.2,422.6 700.9,417.5 702.0,422.6 703.2,418.1 704.3,423.2 706.0,423.2 707.8,430.6 708.9,434.1 710.6,434.1 712.3,418.1 714.1,423.2 715.2,418.1 716.9,418.1 718.1,412.9 722.1,412.9 723.2,406.6 726.1,406.6 726.6,413.2 728.9,413.2 730.1,406.8 733.5,406.8 734.1,412.9 736.4,400.7 738.1,406.8 739.2,413.5 742.7,394.0 743.8,400.9 745.5,400.9 747.8,387.7 749.5,387.7 750.7,394.0 751.8,387.7 754.1,387.7 755.0,381.2 756.2,375.0 759.3,375.0 760.5,367.7 761.7,361.6 766.0,361.6 767.3,367.7 768.5,374.4 770.0,374.4 771.5,361.6 773.4,352.8 775.2,352.8 777.1,367.7 778.5,367.7 779.5,354.8 782.0,354.8 783.8,367.7 786.3,367.7 788.1,381.2 790.5,361.6 792.4,374.4 794.2,374.4 795.4,387.3 797.9,381.2 801.0,367.7 803.4,361.6 806.5,361.6 807.5,354.8 808.3,367.7 810.1,361.6 811.4,354.8 813.2,354.8 815.0,345.6 816.9,321.7 818.1,321.7 819.3,327.9 820.6,327.9 821.8,334.6 823.6,341.3 824.2,361.6 825.5,354.8 826.1,361.6 827.3,341.3 828.5,334.6 829.8,341.3 831.0,341.3 831.6,348.1 833.3,334.5 835.7,334.5 837.4,321.5 838.6,322.7 839.8,328.4 840.6,334.5 841.4,341.3 842.6,348.1 844.5,341.3 845.7,334.6 847.5,341.3 848.8,348.1 850.0,341.3 851.2,341.3 852.1,321.9 853.7,314.9 854.9,321.9 856.1,314.9 857.4,308.4 858.6,308.4 859.4,315.3 861.0,315.3 862.7,301.4 863.9,315.3 865.9,315.3 866.8,308.4 868.0,315.3 869.2,308.4 870.8,308.4 872.5,327.6 873.7,328.0 875.3,325.5" fill="none" stroke="#4356ab" stroke-width="1.35" stroke-linejoin="miter" stroke-miterlimit="2"/><g fill="none" stroke="#b4b4b8" stroke-width="1" shape-rendering="crispEdges"><rect x="103.5" y="291.5" width="773" height="233"/><rect x="103.5" y="531.5" width="773" height="45"/></g></svg>
<div class="yl" style="top:298.5px">70,000</div>
<div class="yl" style="top:327.5px">60,000</div>
<div class="yl" style="top:357.5px">50,000</div>
<div class="yl" style="top:386.5px">40,000</div>
<div class="yl" style="top:415.5px">30,000</div>
<div class="yl" style="top:445.5px">20,000</div>
<div class="yl" style="top:474.5px">10,000</div>
<div class="yl" style="top:504.5px">0</div>
<div class="yl" style="top:541.5px">10</div>
<div class="yl" style="top:570.5px">0</div>
<div style="position:absolute;left:0;top:0;width:883px;height:612px;overflow:hidden">
<div class="xl" style="left:130.2px">May-2019</div>
<div class="xl" style="left:200.2px">Sep-2019</div>
<div class="xl" style="left:270.2px">Jan-2020</div>
<div class="xl" style="left:341.2px">May-2020</div>
<div class="xl" style="left:411.2px">Sep-2020</div>
<div class="xl" style="left:481.2px">Jan-2021</div>
<div class="xl" style="left:550.2px">May-2021</div>
<div class="xl" style="left:621.2px">Sep-2021</div>
<div class="xl" style="left:691.2px">Jan-2022</div>
<div class="xl" style="left:760.2px">May-2022</div>
<div class="xl" style="left:831.2px">Sep-2022</div>
</div>
<div class="rot" style="left:47px;top:409px;">Equity ($)</div>
<div class="rot" style="left:69px;top:555px;letter-spacing:0.5px">Volume</div>
</body></html>
